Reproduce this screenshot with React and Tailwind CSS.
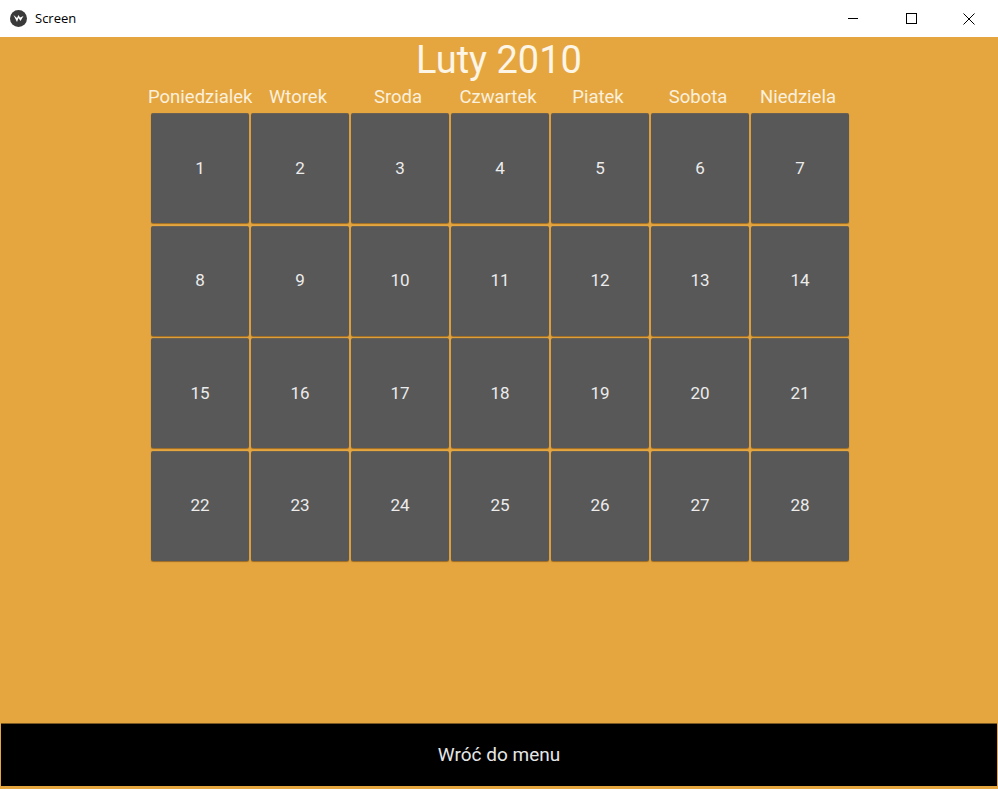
import React from "react";

const days = ["Poniedzialek", "Wtorek", "Sroda", "Czwartek", "Piatek", "Sobota", "Niedziela"];
const dates = Array.from({ length: 28 }, (_, i) => i + 1);

export default function App() {
  return (
    <div className="w-[998px] h-[789px] flex flex-col bg-white overflow-hidden" style={{ fontFamily: "Roboto, 'Noto Sans', sans-serif" }}>
      {/* Window title bar */}
      <div className="h-[37px] flex items-center bg-white shrink-0">
        <div className="ml-[10px] w-[17px] h-[17px] rounded-full bg-[#3a3a3a] flex items-center justify-center">
          <svg width="11" height="9" viewBox="0 0 11 9">
            <path d="M0.5 1 L4 8 L5.5 4 L7.5 7 L10.5 2 L7 3.5 L5.5 1 L4 4 Z" fill="#ffffff" />
          </svg>
        </div>
        <span className="ml-[8px] text-[13px] text-black" style={{ fontFamily: "'Open Sans', 'Noto Sans', sans-serif" }}>Screen</span>
        <div className="ml-auto flex h-full">
          <div className="w-[58px] h-full flex items-center justify-center">
            <div className="w-[10px] h-px bg-black" />
          </div>
          <div className="w-[58px] h-full flex items-center justify-center">
            <div className="w-[11px] h-[11px] border border-black" />
          </div>
          <div className="w-[58px] h-full flex items-center justify-center">
            <svg width="12" height="12" viewBox="0 0 12 12">
              <path d="M0.5 0.5 L11.5 11.5 M11.5 0.5 L0.5 11.5" stroke="#000" strokeWidth="1" />
            </svg>
          </div>
        </div>
      </div>

      {/* Content */}
      <div className="flex-1 flex flex-col bg-[#e5a640]">
        <div className="mt-px h-[44px] text-center text-[38px] leading-[44px] text-[#fdf5e6]">Luty 2010</div>
        <div className="ml-[148px] w-[700px] grid grid-cols-7 mt-[5px] h-[20px]">
          {days.map((d) => (
            <div key={d} className="text-center text-[18.5px] leading-[20px] text-[#fbf0dc] whitespace-nowrap">{d}</div>
          ))}
        </div>
        <div className="ml-[151px] mt-[6px] w-[698px] grid grid-cols-7 gap-x-[2px] gap-y-[2.5px]">
          {dates.map((n) => (
            <div
              key={n}
              className="h-[110px] bg-[#585858] rounded-[2px] border-t border-[#6a6152] shadow-[0_1px_1px_rgba(80,50,10,0.5)] flex items-center justify-center text-[17px] text-[#ececec]"
            >
              {n}
            </div>
          ))}
        </div>
        <div className="flex-1" />
        <div className="mx-px mb-[3px] h-[63px] bg-black border-t border-[#7a5a22] flex items-center justify-center text-[19px] text-[#e6e6e6]">
          Wróć do menu
        </div>
      </div>
    </div>
  );
}
